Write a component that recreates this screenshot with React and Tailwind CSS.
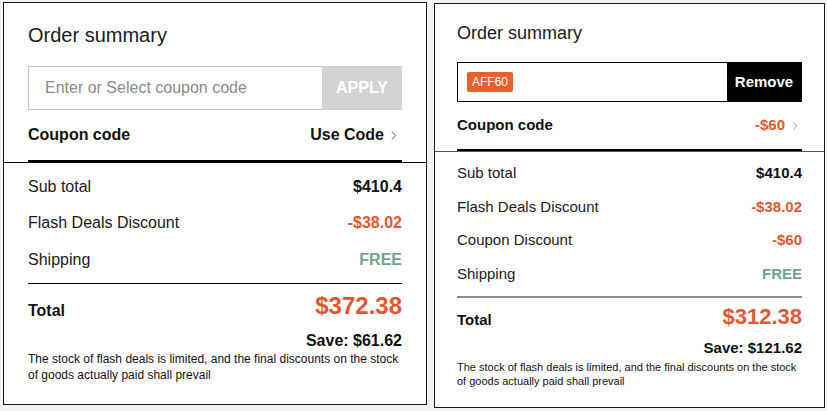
const orange = 'text-[#e4572e]'
const green = 'text-[#6ea58e]'

function Chevron({ className = '' }) {
  return (
    <svg viewBox="0 0 8 12" className={className} fill="none" stroke="#8a8a8a" strokeWidth="1.2">
      <path d="M2 1.5 L6.5 6 L2 10.5" />
    </svg>
  )
}

function Row({ label, value, valueClass, className }) {
  return (
    <div className={`flex items-center justify-between ${className}`}>
      <span className="text-[#1a1a1a]">{label}</span>
      <span className={`font-bold ${valueClass}`}>{value}</span>
    </div>
  )
}

// Summary before a coupon has been applied
function SummaryEmpty() {
  return (
    <div className="w-[424px] h-[403px] bg-white border border-[#1a1a1a]">
      <div className="px-6 pt-[20px]">
        <h2 className="text-[20px] leading-[24px] text-[#1a1a1a]">Order summary</h2>
        <div className="mt-[19px] flex h-[44px]">
          <div className="flex-1 flex items-center border border-[#c4c4c4] border-r-0 pl-4 text-[16px] text-[#8a8a8a]">
            Enter or Select coupon code
          </div>
          <button className="w-[80px] bg-[#d3d3d3] text-white font-bold text-[16px]">APPLY</button>
        </div>
        <div className="h-[52px] flex items-center justify-between border-b-2 border-black text-[16px] font-bold text-[#111]">
          <span>Coupon code</span>
          <span className="flex items-center gap-[6px]">
            Use Code
            <Chevron className="w-[7px] h-[11px] mr-[5px]" />
          </span>
        </div>
      </div>
      <div className="border-t border-black px-6 pt-[6px] text-[16px]">
        <Row className="h-[36px]" label="Sub total" value="$410.4" valueClass="text-[#111] text-[16px]" />
        <Row className="h-[36px]" label="Flash Deals Discount" value="-$38.02" valueClass={`${orange} text-[16px]`} />
        <Row className="h-[37px]" label="Shipping" value="FREE" valueClass={`${green} text-[16px]`} />
        <div className="mt-[5px] border-t border-black flex justify-between">
          <span className="mt-[18px] text-[16px] leading-[18px] font-bold text-[#111]">Total</span>
          <span className={`mt-[8px] text-[24px] leading-[28px] font-bold ${orange}`}>$372.38</span>
        </div>
        <div className="mt-[11px] text-right text-[16px] leading-[20px] font-bold text-[#111]">Save: $61.62</div>
        <p className="text-[12px] leading-[16px] text-[#111]">
          The stock of flash deals is limited, and the final discounts on the stock of goods actually paid shall prevail
        </p>
      </div>
    </div>
  )
}

// Summary with a coupon applied
function SummaryApplied() {
  return (
    <div className="mt-[1px] w-[391px] h-[405px] bg-white border border-[#1a1a1a]">
      <div className="px-[22px] pt-[18px]">
        <h2 className="text-[18px] leading-[22px] text-[#1a1a1a]">Order summary</h2>
        <div className="mt-[18px] flex h-[40px] border border-black">
          <div className="flex-1 flex items-center pl-[9px]">
            <span className="bg-[#e8602c] text-white text-[12px] leading-[20px] px-[5px] rounded-[2px]">AFF60</span>
          </div>
          <button className="w-[74px] bg-black text-white font-bold text-[15px]">Remove</button>
        </div>
        <div className="h-[49px] flex items-center justify-between border-b-2 border-black text-[15px] font-bold text-[#111]">
          <span>Coupon code</span>
          <span className={`flex items-center gap-[7px] ${orange}`}>
            -$60
            <Chevron className="w-[6px] h-[10px] mr-[4px]" />
          </span>
        </div>
      </div>
      <div className="border-t border-[#555] px-[22px] pt-[5px] text-[15px]">
        <Row className="h-[33px]" label="Sub total" value="$410.4" valueClass="text-[#111] text-[15px]" />
        <Row className="h-[34px]" label="Flash Deals Discount" value="-$38.02" valueClass={`${orange} text-[15px]`} />
        <Row className="h-[33px]" label="Coupon Discount" value="-$60" valueClass={`${orange} text-[15px]`} />
        <Row className="h-[34px]" label="Shipping" value="FREE" valueClass={`${green} text-[15px]`} />
        <div className="mt-[5px] border-t-2 border-[#8c8c8c] flex justify-between">
          <span className="mt-[13px] text-[15px] leading-[18px] font-bold text-[#111]">Total</span>
          <span className={`mt-[6px] text-[22px] leading-[26px] font-bold ${orange}`}>$312.38</span>
        </div>
        <div className="mt-[9px] text-right text-[15px] leading-[18px] font-bold text-[#111]">Save: $121.62</div>
        <p className="mt-[3px] text-[11px] leading-[14px] text-[#111]">
          The stock of flash deals is limited, and the final discounts on the stock of goods actually paid shall prevail
        </p>
      </div>
    </div>
  )
}

export default function App() {
  return (
    <div
      className="w-[827px] h-[411px] bg-[#f2f3f3] flex items-start gap-[7px] pl-[3px] pt-[2px]"
      style={{ fontFamily: '"Liberation Sans", Arial, sans-serif' }}
    >
      <SummaryEmpty />
      <SummaryApplied />
    </div>
  )
}
